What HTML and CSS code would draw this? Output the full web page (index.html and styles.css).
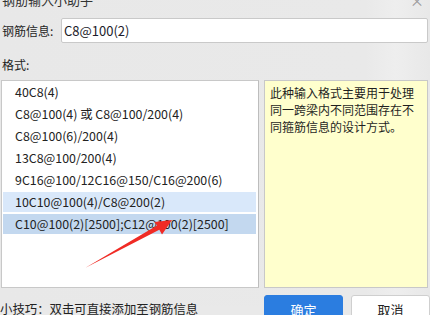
FILE: index.html
```html
<!DOCTYPE html>
<html lang="zh-CN">
<head>
<meta charset="utf-8">
<title>钢筋输入小助手</title>
<link rel="stylesheet" href="styles.css">
</head>
<body>
<div class="dialog">
  <div class="titlebar"><span class="title">钢筋输入小助手</span><span class="close">×</span></div>
  <div class="info-row">
    <span class="label">钢筋信息:</span>
    <div class="input">C8@100(2)</div>
  </div>
  <div class="section-label">格式:</div>
  <div class="main">
    <ul class="list">
      <li>40C8(4)</li>
      <li>C8@100(4) 或 C8@100/200(4)</li>
      <li>C8@100(6)/200(4)</li>
      <li>13C8@100/200(4)</li>
      <li>9C16@100/12C16@150/C16@200(6)</li>
      <li class="hover">10C10@100(4)/C8@200(2)</li>
      <li class="selected">C10@100(2)[2500];C12@100(2)[2500]</li>
    </ul>
    <div class="desc">此种输入格式主要用于处理同一跨梁内不同范围存在不同箍筋信息的设计方式。</div>
  </div>
  <div class="footer">
    <span class="tip">小技巧：双击可直接添加至钢筋信息</span>
    <div class="buttons">
      <button class="btn primary">确定</button>
      <button class="btn">取消</button>
    </div>
  </div>
  <svg class="arrow" width="430" height="315" viewBox="0 0 430 315">
    <polygon points="85,277 157,234.6 154.5,231 172,229 162,243.5 159.3,238.8" fill="#f02b25"/>
  </svg>
</div>
</body>
</html>
```
FILE: styles.css
```css
* { box-sizing: border-box; }
html, body {
  margin: 0;
  padding: 0;
  width: 430px;
  height: 315px;
  overflow: hidden;
  background: #e9e9e9;
}
body {
  font-family: "Noto Sans CJK SC", "Noto Sans", sans-serif;
  font-size: 12px;
  color: #1f1f1f;
}
.dialog {
  position: relative;
  width: 430px;
  height: 315px;
  padding: 0 2px 0 1px;
  background: linear-gradient(90deg, #e8e8e8 0%, #e9e9e9 85%, #eeeeee 92%, #e8e8e8 100%);
}
.titlebar {
  display: flex;
  justify-content: space-between;
  align-items: center;
  height: 18px;
  margin-top: -9px;
  line-height: 18px;
  font-size: 13px;
  color: #333;
}
.title { padding-left: 1px; }
.close {
  color: #9a9a9a;
  font-size: 14px;
  margin-right: 4px;
}
.info-row {
  display: flex;
  align-items: center;
  margin-top: 9px;
  height: 25px;
}
.label {
  width: 60px;
  padding-left: 1px;
  font-size: 12px;
}
.input {
  flex: 1;
  height: 25px;
  line-height: 23px;
  padding-left: 2px;
  background: #fff;
  border: 1px solid #c9c9c9;
  border-radius: 2px;
  font-size: 13px;
  color: #1c1c2a;
}
.section-label {
  margin-top: 13px;
  line-height: 18px;
  height: 18px;
  padding-left: 1px;
}
.main {
  display: grid;
  grid-template-columns: 258px 164px;
  column-gap: 5px;
  margin-top: 6px;
  height: 208px;
}
.list {
  list-style: none;
  margin: 0;
  padding: 1px 2px 1px 1px;
  background: #fff;
  border: 1px solid #c8c8c8;
  border-right-color: #bdbdbd;
}
.list li {
  height: 20px;
  line-height: 20px;
  margin-bottom: 2px;
  padding-left: 12px;
  font-size: 12.4px;
  color: #222;
  white-space: nowrap;
}
.list li.hover { background: #d9e8fa; }
.list li.selected { background: #c3d8ef; }
.desc {
  background: #ffffcd;
  border: 1px solid #c8c8c8;
  padding: 3px 6px 0 5px;
  font-size: 12px;
  line-height: 17px;
  color: #1f1f1f;
}
.footer {
  display: flex;
  align-items: center;
  justify-content: space-between;
  margin-top: 7px;
  margin-left: -1px;
  margin-right: -2px;
}
.tip { font-size: 12.4px; color: #222; }
.buttons {
  display: flex;
  gap: 8px;
}
.btn {
  width: 79px;
  height: 28px;
  border: 1px solid #cfcfcf;
  border-radius: 3px;
  background: #fff;
  font-family: inherit;
  font-size: 13px;
  color: #222;
  padding: 0;
}
.btn.primary {
  background: #2b7de0;
  border-color: #2b7de0;
  color: #fff;
}
.arrow {
  position: absolute;
  left: 0;
  top: 0;
  pointer-events: none;
}
```
